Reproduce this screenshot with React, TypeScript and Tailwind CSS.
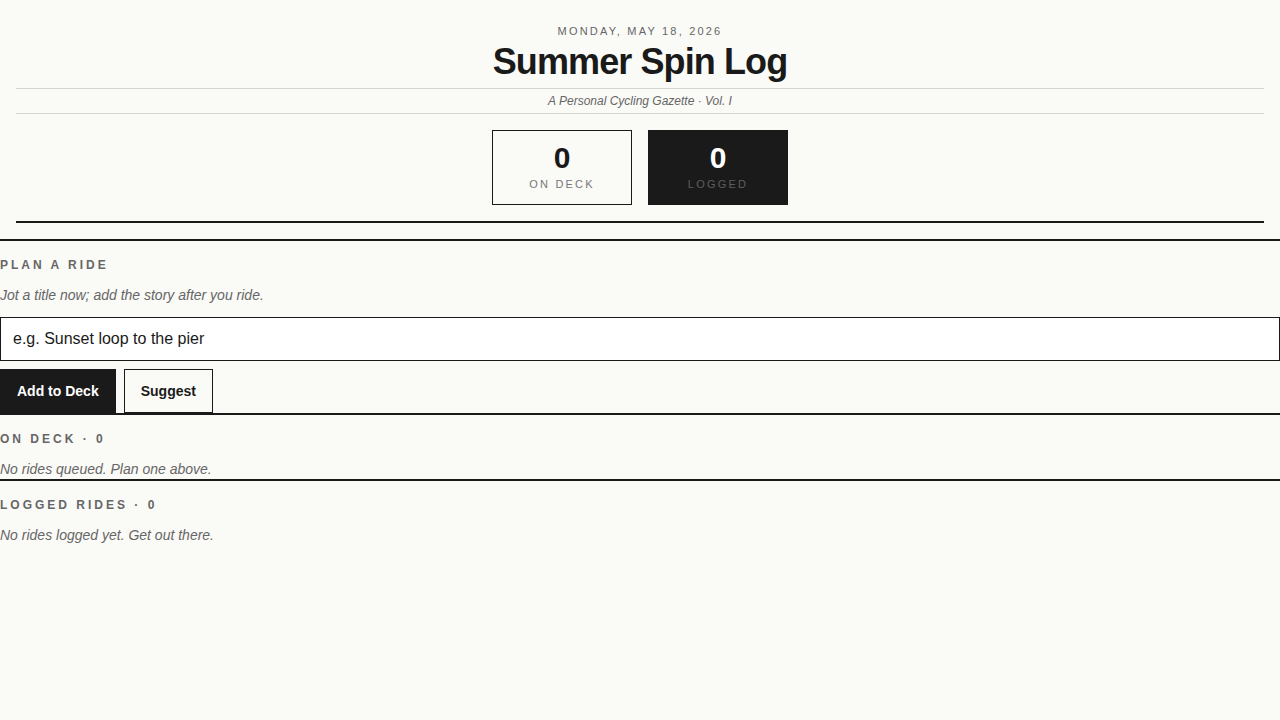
export default function App() {
  return (
    <div
      className="min-h-[720px] bg-[#fafaf7] text-[#1a1a1a]"
      style={{ fontFamily: '"Liberation Sans", Arial, sans-serif' }}
    >
      {/* Masthead */}
      <header className="mx-4 pt-[23px] pb-4 border-b-2 border-[#1a1a1a] text-center">
        <div className="text-[11px] leading-4 tracking-[0.2em] uppercase text-[#666]">
          Monday, May 18, 2026
        </div>
        <h1 className="mt-[3px] text-[36px] leading-10 font-bold tracking-tight">Summer Spin Log</h1>
        <div className="mt-[6px] py-1 border-y border-[#d6d6d1] text-xs leading-4 italic text-[#666]">
          A Personal Cycling Gazette · Vol. I
        </div>
        <div className="mt-4 flex justify-center gap-4">
          <div className="w-[140px] border border-[#1a1a1a] pt-3 pb-3">
            <div className="text-[30px] leading-[30px] font-bold">0</div>
            <div className="mt-[3px] text-[11px] leading-4 tracking-[0.2em] uppercase text-[#777]">On Deck</div>
          </div>
          <div className="w-[140px] border border-[#1a1a1a] bg-[#1a1a1a] pt-3 pb-3">
            <div className="text-[30px] leading-[30px] font-bold text-white">0</div>
            <div className="mt-[3px] text-[11px] leading-4 tracking-[0.2em] uppercase text-[#5e5e5e]">Logged</div>
          </div>
        </div>
      </header>

      {/* Plan a ride */}
      <section className="mt-4 border-t-2 border-[#1a1a1a] pt-4">
        <h2 className="text-xs leading-4 font-bold tracking-[0.25em] uppercase text-[#666]">Plan a Ride</h2>
        <p className="mt-3 text-sm leading-5 italic text-[#666]">
          Jot a title now; add the story after you ride.
        </p>
        <input
          type="text"
          placeholder="e.g. Sunset loop to the pier"
          className="mt-3 block w-full h-11 border border-[#1a1a1a] bg-white px-3 text-base text-[#1a1a1a] placeholder:text-[#1a1a1a] outline-none"
        />
        <div className="mt-2 flex gap-2">
          <button className="h-11 border border-[#1a1a1a] bg-[#1a1a1a] px-4 text-sm font-bold text-white">
            Add to Deck
          </button>
          <button className="h-11 border border-[#1a1a1a] px-4 text-sm font-bold text-[#1a1a1a]">
            Suggest
          </button>
        </div>
      </section>

      {/* On deck */}
      <section className="border-t-2 border-[#1a1a1a] pt-4">
        <h2 className="text-xs leading-4 font-bold tracking-[0.25em] uppercase text-[#666]">On Deck · 0</h2>
        <p className="mt-3 text-sm leading-5 italic text-[#666]">No rides queued. Plan one above.</p>
      </section>

      {/* Logged rides */}
      <section className="border-t-2 border-[#1a1a1a] pt-4">
        <h2 className="text-xs leading-4 font-bold tracking-[0.25em] uppercase text-[#666]">Logged Rides · 0</h2>
        <p className="mt-3 text-sm leading-5 italic text-[#666]">No rides logged yet. Get out there.</p>
      </section>
    </div>
  );
}
